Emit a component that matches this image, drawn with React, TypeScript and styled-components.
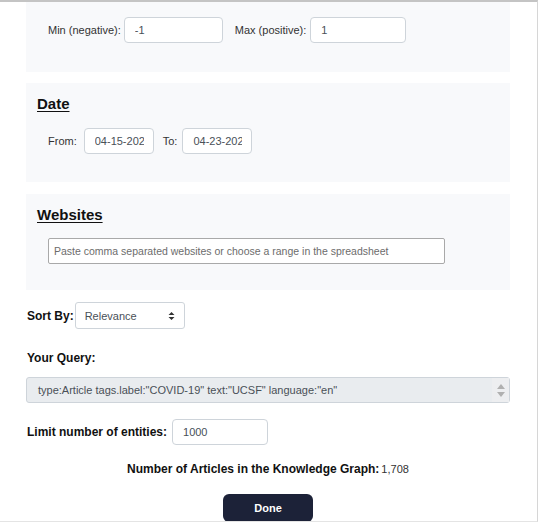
import React from "react";
import styled, { createGlobalStyle } from "styled-components";

const Global = createGlobalStyle`
  html, body { margin: 0; padding: 0; background: #fff; }
  body { font-family: "Liberation Sans", Arial, sans-serif; color: #212529; }
`;

const Frame = styled.div`
  box-sizing: border-box;
  width: 538px;
  height: 522px;
  overflow: hidden;
  border-top: 2px solid #c4c4c4;
  border-right: 1px solid #d6d6d6;
  border-bottom: 1px solid #e4e4e4;
  padding: 0 27px 0 26px;
  display: flex;
  flex-direction: column;
  & > * { flex-shrink: 0; }
`;

const Panel = styled.section<{ $top: number; $h: number }>`
  box-sizing: border-box;
  background: #f8f9fb;
  margin-top: ${(p) => p.$top}px;
  height: ${(p) => p.$h}px;
  padding: 0 11px;
  display: flex;
  flex-direction: column;
`;

const Title = styled.h3`
  margin: 12px 0 0;
  font-size: 15px;
  font-weight: 700;
  line-height: 18px;
  color: #111;
  text-decoration: underline;
  text-underline-offset: 2px;
`;

const Row = styled.div<{ $top: number }>`
  display: flex;
  align-items: center;
  margin-top: ${(p) => p.$top}px;
  padding-left: 11px;
`;

const Label = styled.span<{ $gap?: number }>`
  font-size: 11px;
  color: #333;
  margin-right: ${(p) => p.$gap ?? 4}px;
`;

const TextInput = styled.div<{ $w: number; $after?: number }>`
  box-sizing: border-box;
  width: ${(p) => p.$w}px;
  height: 26px;
  border: 1px solid #ced4da;
  border-radius: 4px;
  background: #fff;
  font-size: 11px;
  color: #495057;
  padding: 0 9px 0 10px;
  display: flex;
  align-items: center;
  margin-right: ${(p) => p.$after ?? 0}px;
`;

const Value = styled.span`
  flex: 1;
  min-width: 0;
  overflow: hidden;
  white-space: nowrap;
`;

const WideInput = styled.div`
  box-sizing: border-box;
  width: 397px;
  height: 26px;
  border: 1px solid #a9a9a9;
  border-radius: 2px;
  background: #fff;
  font-size: 10.5px;
  color: #6c6c6c;
  padding: 0 5px;
  display: flex;
  align-items: center;
  white-space: nowrap;
`;

const BoldLabel = styled.span`
  font-size: 12px;
  font-weight: 700;
  color: #111;
`;

const OuterRow = styled.div<{ $top: number; $gap?: number }>`
  display: flex;
  align-items: center;
  margin-top: ${(p) => p.$top}px;
  padding-left: 1px;
  gap: ${(p) => p.$gap ?? 0}px;
`;

const Select = styled.div`
  box-sizing: border-box;
  width: 110px;
  height: 27px;
  border: 1px solid #ced4da;
  border-radius: 3px;
  background: #fff;
  font-size: 11px;
  color: #495057;
  padding: 0 9px 0 9px;
  display: flex;
  align-items: center;
  justify-content: space-between;
  margin-left: 1px;
`;

const QueryLabel = styled.div`
  margin-top: 22px;
  padding-left: 1px;
  font-size: 12px;
  font-weight: 700;
  color: #111;
  line-height: 14px;
`;

const QueryBox = styled.div`
  box-sizing: border-box;
  margin-top: 12px;
  width: 484px;
  height: 26px;
  border: 1px solid #ced4da;
  border-radius: 3px;
  background: #e9ecef;
  font-size: 11px;
  color: #495057;
  padding: 0 0 0 11px;
  display: flex;
  align-items: center;
  justify-content: space-between;
`;

const Spinner = styled.div`
  width: 17px;
  height: 24px;
  background: #edeef0;
  display: flex;
  flex-direction: column;
  align-items: center;
  justify-content: center;
  gap: 3px;
`;

const CountLine = styled.div`
  margin-top: 17px;
  display: flex;
  justify-content: center;
  align-items: baseline;
  gap: 2px;
`;

const CountValue = styled.span`
  font-size: 11px;
  color: #333;
`;

const Done = styled.button`
  align-self: center;
  margin-top: 18px;
  width: 90px;
  height: 28px;
  border: none;
  border-radius: 6px;
  background: #1c2238;
  color: #fff;
  font-family: "Liberation Sans", Arial, sans-serif;
  font-size: 11px;
  font-weight: 700;
`;

export default function App() {
  return (
    <>
      <Global />
      <Frame>
        <Panel $top={0} $h={70}>
          <Row $top={15}>
            <Label $gap={3}>Min (negative):</Label>
            <TextInput $w={99} $after={12}><Value>-1</Value></TextInput>
            <Label>Max (positive):</Label>
            <TextInput $w={96}><Value>1</Value></TextInput>
          </Row>
        </Panel>
        <Panel $top={11} $h={99}>
          <Title>Date</Title>
          <Row $top={15}>
            <Label $gap={7}>From:</Label>
            <TextInput $w={70} $after={9}><Value>04-15-2020</Value></TextInput>
            <Label $gap={5}>To:</Label>
            <TextInput $w={70}><Value>04-23-2020</Value></TextInput>
          </Row>
        </Panel>
        <Panel $top={12} $h={96}>
          <Title>Websites</Title>
          <Row $top={14}>
            <WideInput>Paste comma separated websites or choose a range in the spreadsheet</WideInput>
          </Row>
        </Panel>
        <OuterRow $top={12}>
          <BoldLabel>Sort By:</BoldLabel>
          <Select>
            <span>Relevance</span>
            <svg width="7" height="10" viewBox="0 0 7 10">
              <path d="M3.5 1 L6.5 4 H0.5 Z M3.5 9 L0.5 6 H6.5 Z" fill="#333" />
            </svg>
          </Select>
        </OuterRow>
        <QueryLabel>Your Query:</QueryLabel>
        <QueryBox>
          <span>{'type:Article tags.label:"COVID-19" text:"UCSF" language:"en"'}</span>
          <Spinner>
            <svg width="8" height="5" viewBox="0 0 8 5"><path d="M4 0 L8 5 H0 Z" fill="#b0b0b0" /></svg>
            <svg width="8" height="5" viewBox="0 0 8 5"><path d="M0 0 H8 L4 5 Z" fill="#b0b0b0" /></svg>
          </Spinner>
        </QueryBox>
        <OuterRow $top={16} $gap={5}>
          <BoldLabel>Limit number of entities:</BoldLabel>
          <TextInput $w={96}><Value>1000</Value></TextInput>
        </OuterRow>
        <CountLine>
          <BoldLabel>Number of Articles in the Knowledge Graph:</BoldLabel>
          <CountValue>1,708</CountValue>
        </CountLine>
        <Done>Done</Done>
      </Frame>
    </>
  );
}
